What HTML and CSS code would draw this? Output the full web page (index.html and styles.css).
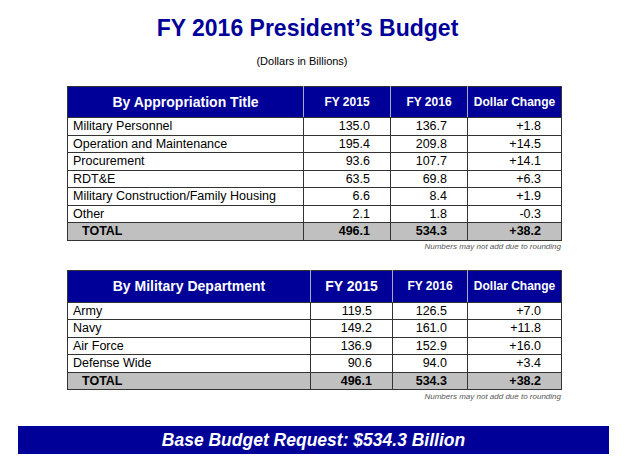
FILE: index.html
```html
<!DOCTYPE html>
<html>
<head>
<meta charset="utf-8">
<link rel="stylesheet" href="styles.css">
</head>
<body>
<div class="page">
  <h1 class="title">FY 2016 President’s Budget</h1>
  <p class="subtitle">(Dollars in Billions)</p>

  <table class="budget budget-a">
    <colgroup><col class="c1"><col class="c2"><col class="c3"><col class="c4"></colgroup>
    <thead>
      <tr><th class="big">By Appropriation Title</th><th>FY 2015</th><th>FY 2016</th><th>Dollar Change</th></tr>
    </thead>
    <tbody>
      <tr><td>Military Personnel</td><td class="num">135.0</td><td class="num">136.7</td><td class="num">+1.8</td></tr>
      <tr><td>Operation and Maintenance</td><td class="num">195.4</td><td class="num">209.8</td><td class="num">+14.5</td></tr>
      <tr><td>Procurement</td><td class="num">93.6</td><td class="num">107.7</td><td class="num">+14.1</td></tr>
      <tr><td>RDT&amp;E</td><td class="num">63.5</td><td class="num">69.8</td><td class="num">+6.3</td></tr>
      <tr><td>Military Construction/Family Housing</td><td class="num">6.6</td><td class="num">8.4</td><td class="num">+1.9</td></tr>
      <tr><td>Other</td><td class="num">2.1</td><td class="num">1.8</td><td class="num">-0.3</td></tr>
      <tr class="total"><td class="total-label">TOTAL</td><td class="num">496.1</td><td class="num">534.3</td><td class="num">+38.2</td></tr>
    </tbody>
  </table>
  <p class="note note-a">Numbers may not add due to rounding</p>

  <table class="budget budget-b">
    <colgroup><col class="d1"><col class="d2"><col class="d3"><col class="d4"></colgroup>
    <thead>
      <tr><th class="big">By Military Department</th><th class="big">FY 2015</th><th>FY 2016</th><th>Dollar Change</th></tr>
    </thead>
    <tbody>
      <tr><td>Army</td><td class="num">119.5</td><td class="num">126.5</td><td class="num">+7.0</td></tr>
      <tr><td>Navy</td><td class="num">149.2</td><td class="num">161.0</td><td class="num">+11.8</td></tr>
      <tr><td>Air Force</td><td class="num">136.9</td><td class="num">152.9</td><td class="num">+16.0</td></tr>
      <tr><td>Defense Wide</td><td class="num">90.6</td><td class="num">94.0</td><td class="num">+3.4</td></tr>
      <tr class="total"><td class="total-label">TOTAL</td><td class="num">496.1</td><td class="num">534.3</td><td class="num">+38.2</td></tr>
    </tbody>
  </table>
  <p class="note note-b">Numbers may not add due to rounding</p>

  <div class="banner">Base Budget Request: $534.3 Billion</div>
</div>
</body>
</html>
```

FILE: styles.css
```css
* { box-sizing: border-box; }
html, body { margin: 0; padding: 0; background: #ffffff; }
body {
  font-family: "Liberation Sans", Arial, sans-serif;
  color: #000000;
  width: 625px;
  height: 459px;
  overflow: hidden;
}
.page {
  display: flex;
  flex-direction: column;
  padding-top: 14px;
}
.title {
  margin: 0;
  font-size: 23px;
  line-height: 28px;
  font-weight: bold;
  color: #000099;
  text-align: center;
  padding-right: 10px;
}
.subtitle {
  margin: 12px 0 0 0;
  font-size: 11px;
  line-height: 14px;
  text-align: center;
  padding-right: 21px;
}
.budget {
  margin-left: 67px;
  width: 494px;
  border-collapse: collapse;
  table-layout: fixed;
  border: 1px solid #333333;
}
.budget-a { margin-top: 18px; }
.budget-b { margin-top: 18px; }
.c1 { width: 236px; } .c2 { width: 87px; } .c3 { width: 77px; } .c4 { width: 94px; }
.d1 { width: 243px; } .d2 { width: 82px; } .d3 { width: 75px; } .d4 { width: 94px; }

.budget th {
  background: #000099;
  color: #ffffff;
  font-weight: bold;
  font-size: 12px;
  text-align: center;
  padding: 0;
  border: 1px solid #333333;
  border-left-color: #a8a8cc;
  border-right-color: #a8a8cc;
  white-space: nowrap;
}
.budget th:first-child { border-left-color: #333333; }
.budget th:last-child { border-right-color: #333333; }
.budget th.big { font-size: 14px; }
.budget-a thead tr { height: 31px; }
.budget-b thead tr { height: 32px; }

.budget td {
  font-size: 12.5px;
  line-height: 14px;
  padding: 0 0 0 5px;
  border: 1px solid #333333;
  white-space: nowrap;
}
.budget tbody tr { height: 17.5px; }
.budget td.num {
  text-align: right;
  padding: 0 20px 0 0;
}
.total td {
  background: #c0c0c0;
  font-weight: bold;
}
.total td.total-label { padding-left: 14px; }

.note {
  margin: 0;
  margin-left: 67px;
  width: 494px;
  text-align: right;
  font-size: 8px;
  line-height: 10px;
  font-style: italic;
  color: #555555;
}
.note-a { margin-top: 1px; }
.note-b { margin-top: 2px; }

.banner {
  margin-top: 24px;
  margin-left: 18px;
  width: 591px;
  height: 28px;
  background: #000099;
  color: #ffffff;
  font-size: 17.5px;
  line-height: 28px;
  font-weight: bold;
  font-style: italic;
  text-align: center;
}
```
